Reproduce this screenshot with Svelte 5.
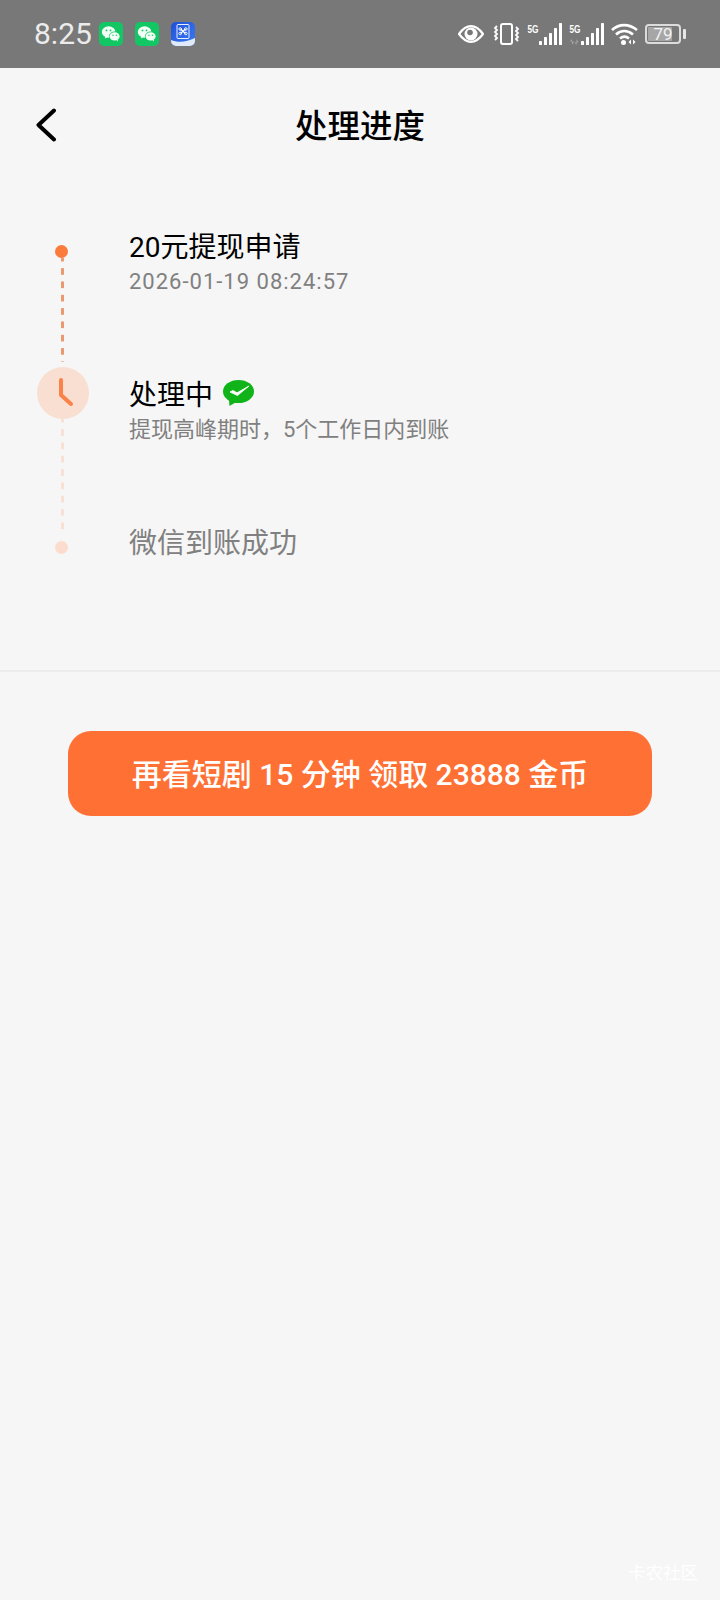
<script lang="ts">
  const steps = [
    { title: '20元提现申请', sub: '2026-01-19 08:24:57', state: 'done' },
    { title: '处理中', sub: '提现高峰期时，5个工作日内到账', state: 'active' },
    { title: '微信到账成功', sub: '', state: 'todo' }
  ];
</script>

{#snippet wechat()}
  <svg class="app" width="24" height="24" viewBox="0 0 24 24" aria-hidden="true">
    <rect width="24" height="24" rx="5" fill="#12c763" />
    <ellipse cx="9.600" cy="10" rx="6.800" ry="5.800" fill="#f2fff6" />
    <path d="M6.500 14.200l-.6 2.400 2.700-1.400z" fill="#f2fff6" />
    <ellipse cx="15.600" cy="14.400" rx="5.600" ry="4.800" fill="#12c763" />
    <ellipse cx="15.600" cy="14.400" rx="5" ry="4.200" fill="#f2fff6" />
    <path d="M17.500 18l1.500 1.800-.2-2.400z" fill="#f2fff6" />
    <circle cx="7.500" cy="8.400" r=".9" fill="#12c763" />
    <circle cx="11.500" cy="8.400" r=".9" fill="#12c763" />
    <circle cx="14" cy="13.200" r=".7" fill="#12c763" />
    <circle cx="17.400" cy="13.200" r=".7" fill="#12c763" />
  </svg>
{/snippet}

{#snippet signal(arrows)}
  <svg width="35" height="22" viewBox="0 0 35 22" aria-hidden="true">
    <text x="0.500" y="9.500" class="five" textLength="11" lengthAdjust="spacingAndGlyphs">5G</text>
    {#if arrows}
      <path d="M3 22v-6l-2 2.500h4zM7.500 16v6l-2-2.500h4z" fill="#ababab" />
    {/if}
    <g fill="#fff">
      <rect x="12" y="18" width="3" height="4" rx=".6" />
      <rect x="17" y="14" width="3" height="8" rx=".6" />
      <rect x="22" y="10" width="3" height="12" rx=".6" />
      <rect x="27" y="5" width="3" height="17" rx=".6" />
      <rect x="32" y="0" width="3" height="22" rx=".6" />
    </g>
  </svg>
{/snippet}

<div class="page">
  <header class="status">
    <span class="time">8:25</span>
    <div class="apps">
      {@render wechat()}
      {@render wechat()}
      <svg class="app" width="24" height="24" viewBox="0 0 24 24" aria-hidden="true">
        <defs>
          <linearGradient id="blue" x1="0" y1="0" x2="1" y2="1">
            <stop offset="0" stop-color="#1f4fd8" />
            <stop offset="1" stop-color="#3d7df0" />
          </linearGradient>
        </defs>
        <rect width="24" height="24" rx="5" fill="url(#blue)" />
        <path d="M0 18c7 3 16 2 24-2v3a5 5 0 0 1-5 5H5a5 5 0 0 1-5-5z" fill="#dfeafa" />
        <rect x="6" y="2.500" width="12" height="14" rx="1" fill="none" stroke="#e8f0ff" stroke-width="1" />
        <path d="M9.500 7l5 4.500M14.500 7l-5 4.500" stroke="#fff" stroke-width="1.200" />
        <circle cx="9.200" cy="7" r="1.300" fill="none" stroke="#fff" stroke-width=".9" />
        <circle cx="14.800" cy="7" r="1.300" fill="none" stroke="#fff" stroke-width=".9" />
        <circle cx="9.200" cy="11.500" r="1.300" fill="none" stroke="#fff" stroke-width=".9" />
        <circle cx="14.800" cy="11.500" r="1.300" fill="none" stroke="#fff" stroke-width=".9" />
      </svg>
    </div>
    <div class="sys">
      <svg class="eye" width="26" height="18" viewBox="0 0 26 18" aria-hidden="true">
        <path d="M1 9C5 3.500 9 1.200 13 1.200S21 3.500 25 9c-4 5.500-8 7.800-12 7.800S5 14.500 1 9z" fill="none" stroke="#fff" stroke-width="2.200" />
        <circle cx="13" cy="9" r="6.500" fill="#fff" />
        <circle cx="12" cy="7.500" r="2.800" fill="#787878" />
      </svg>
      <svg width="27" height="22" viewBox="0 0 27 22" aria-hidden="true">
        <rect x="8" y="1" width="11" height="20" rx="2" fill="none" stroke="#fff" stroke-width="2" />
        <path d="M3 3l-2 2 2 2-2 2 2 2-2 2 2 2-2 2" fill="none" stroke="#fff" stroke-width="1.800" transform="translate(1 0)" />
        <path d="M24 3l2 2-2 2 2 2-2 2 2 2-2 2 2 2" fill="none" stroke="#fff" stroke-width="1.800" transform="translate(-1 1)" />
      </svg>
      {@render signal(false)}
      {@render signal(true)}
      <svg width="27" height="22" viewBox="0 0 27 22" aria-hidden="true">
        <path d="M1 7c7-6.500 17-6.500 25 0M5 11.500c5-4.500 11.500-4.500 17 0M9 15.500c3-2.500 6-2.500 9 0" fill="none" stroke="#fff" stroke-width="2.600" />
        <circle cx="12.500" cy="19.500" r="2.500" fill="#fff" />
        <path d="M20 16.500v5l-2.500-2.500zM22 16.500v5l2.500-2.500z" fill="#fff" />
      </svg>
      <div class="battery">
        <div class="cell">
          <div class="charge"></div>
          <span>79</span>
        </div>
        <div class="nub"></div>
      </div>
    </div>
  </header>

  <nav class="nav">
    <svg class="back" width="22" height="34" viewBox="0 0 22 34" aria-hidden="true">
      <path d="M19 2.500L3.500 17 19 31.500" fill="none" stroke="#000" stroke-width="4" stroke-linecap="round" stroke-linejoin="round" />
    </svg>
    <h1>处理进度</h1>
    <span></span>
  </nav>

  <section class="progress">
    <div class="rail" aria-hidden="true">
      <i class="dot"></i>
      <i class="dash first"></i>
      <div class="clock">
        <svg width="24" height="32" viewBox="0 0 24 32">
          <path d="M10 3v15l10 9" fill="none" stroke="#fb8248" stroke-width="4" stroke-linecap="round" stroke-linejoin="round" />
        </svg>
      </div>
      <i class="dash second"></i>
      <i class="dot pale"></i>
    </div>
    <div class="steps">
      {#each steps as step (step.title)}
        <div class="step {step.state}">
          <div class="title">
            {step.title}
            {#if step.state === 'active'}
              <svg width="31" height="26" viewBox="0 0 31 26" aria-hidden="true">
                <ellipse cx="15.500" cy="11.500" rx="15.500" ry="11.500" fill="#10b318" />
                <path d="M6 20l.500 6 6-3.500z" fill="#10b318" />
                <path d="M7 12l3-1.500 4 2.300 12-6.800-11.500 9.500z" fill="#fff" stroke="#fff" stroke-width=".8" stroke-linejoin="round" />
              </svg>
            {/if}
          </div>
          {#if step.sub}
            <div class="sub">{step.sub}</div>
          {/if}
        </div>
      {/each}
    </div>
  </section>

  <div class="action">
    <button type="button" class="cta">再看短剧 15 分钟 领取 23888 金币</button>
  </div>

  <div class="spacer"></div>
  <div class="mark">卡农社区</div>
</div>

<style>
  :global(body) {
    margin: 0;
    background: #f6f6f6;
  }

  .page {
    height: 1600px;
    display: flex;
    flex-direction: column;
    overflow: hidden;
    background: #f6f6f6;
    font-family: Roboto, "Noto Sans CJK SC", sans-serif;
  }

  .status {
    height: 68px;
    flex: none;
    display: flex;
    align-items: center;
    padding: 0 34px;
    background: #787878;
    color: #ececec;
  }

  .time {
    font-size: 30px;
    line-height: 1;
    width: 65px;
  }

  .apps {
    display: flex;
    gap: 12px;
  }

  .app {
    display: block;
  }

  .sys {
    margin-left: auto;
    display: flex;
    align-items: center;
    gap: 7px;
  }

  .sys svg {
    display: block;
  }

  .sys .eye {
    margin-right: 2px;
  }

  .five {
    font-family: "Liberation Sans", sans-serif;
    font-size: 11px;
    font-weight: 700;
    fill: #fff;
  }

  .battery {
    display: flex;
    align-items: center;
    gap: 2px;
  }

  .cell {
    position: relative;
    width: 36px;
    height: 20px;
    box-sizing: border-box;
    border: 2px solid #dcdcdc;
    border-radius: 4px;
    padding: 1px;
    display: flex;
  }

  .charge {
    width: 79%;
    background: #a6a6a6;
    border-radius: 1px;
  }

  .cell span {
    position: absolute;
    inset: 0;
    text-align: center;
    font-size: 17px;
    line-height: 16px;
    color: #f2f2f2;
  }

  .nub {
    width: 3px;
    height: 10px;
    border-radius: 1px;
    background: #e6e6e6;
  }

  .nav {
    height: 114px;
    flex: none;
    display: grid;
    grid-template-columns: 1fr auto 1fr;
    align-items: center;
    padding: 0 35px;
  }

  .nav h1 {
    margin: 0 0 4px;
    font-size: 32.500px;
    font-weight: 500;
    color: #000;
  }

  .back {
    display: block;
  }

  .progress {
    height: 490px;
    flex: none;
    box-sizing: border-box;
    display: flex;
    border-bottom: 2px solid #ececec;
    padding: 63px 0 0 37px;
  }

  .rail {
    width: 52px;
    display: flex;
    flex-direction: column;
    align-items: center;
  }

  .dot {
    width: 13px;
    height: 13px;
    flex: none;
    border-radius: 50%;
    margin-right: 3px;
    background: #fb7b3c;
  }

  .dot.pale {
    background: #fbdccd;
  }

  .dash {
    width: 3px;
    margin-right: 2px;
    flex: none;
    background-size: 100% 13.330px;
    background-position: 0 -3.200px;
  }

  .dash.first {
    height: 104px;
    margin-bottom: 5px;
    background-image: linear-gradient(#ea9a72 6.670px, transparent 6.670px);
  }

  .dash.second {
    height: 115px;
    margin-bottom: 7px;
    background-image: linear-gradient(#f9e0d4 6.670px, transparent 6.670px);
  }

  .clock {
    width: 52px;
    height: 52px;
    flex: none;
    border-radius: 50%;
    background: #f9dfd2;
    display: flex;
    align-items: center;
    justify-content: center;
  }

  .clock svg {
    display: block;
  }

  .steps {
    margin: -20px 0 0 40px;
    display: flex;
    flex-direction: column;
  }

  .step {
    height: 148px;
  }

  .title {
    display: flex;
    align-items: center;
    gap: 10px;
    height: 40px;
    font-size: 28px;
    color: #000;
  }

  .sub {
    margin-top: 2px;
    height: 30px;
    line-height: 30px;
    font-size: 22px;
    color: #808080;
  }

  .step.done .sub {
    letter-spacing: 1px;
  }

  .step.todo .title {
    color: #808080;
  }

  .action {
    padding: 59px 68px 0;
  }

  .cta {
    display: block;
    width: 100%;
    height: 85px;
    padding: 0 0 3px;
    border: 0;
    border-radius: 23px;
    background: #ff7034;
    color: #fff;
    font-family: inherit;
    font-size: 30px;
    font-weight: 500;
  }

  .spacer {
    flex: 1;
  }

  .mark {
    align-self: flex-end;
    padding: 0 22px 17px 0;
    font-size: 17.500px;
    line-height: 20px;
    color: #ffffff;
  }
</style>
